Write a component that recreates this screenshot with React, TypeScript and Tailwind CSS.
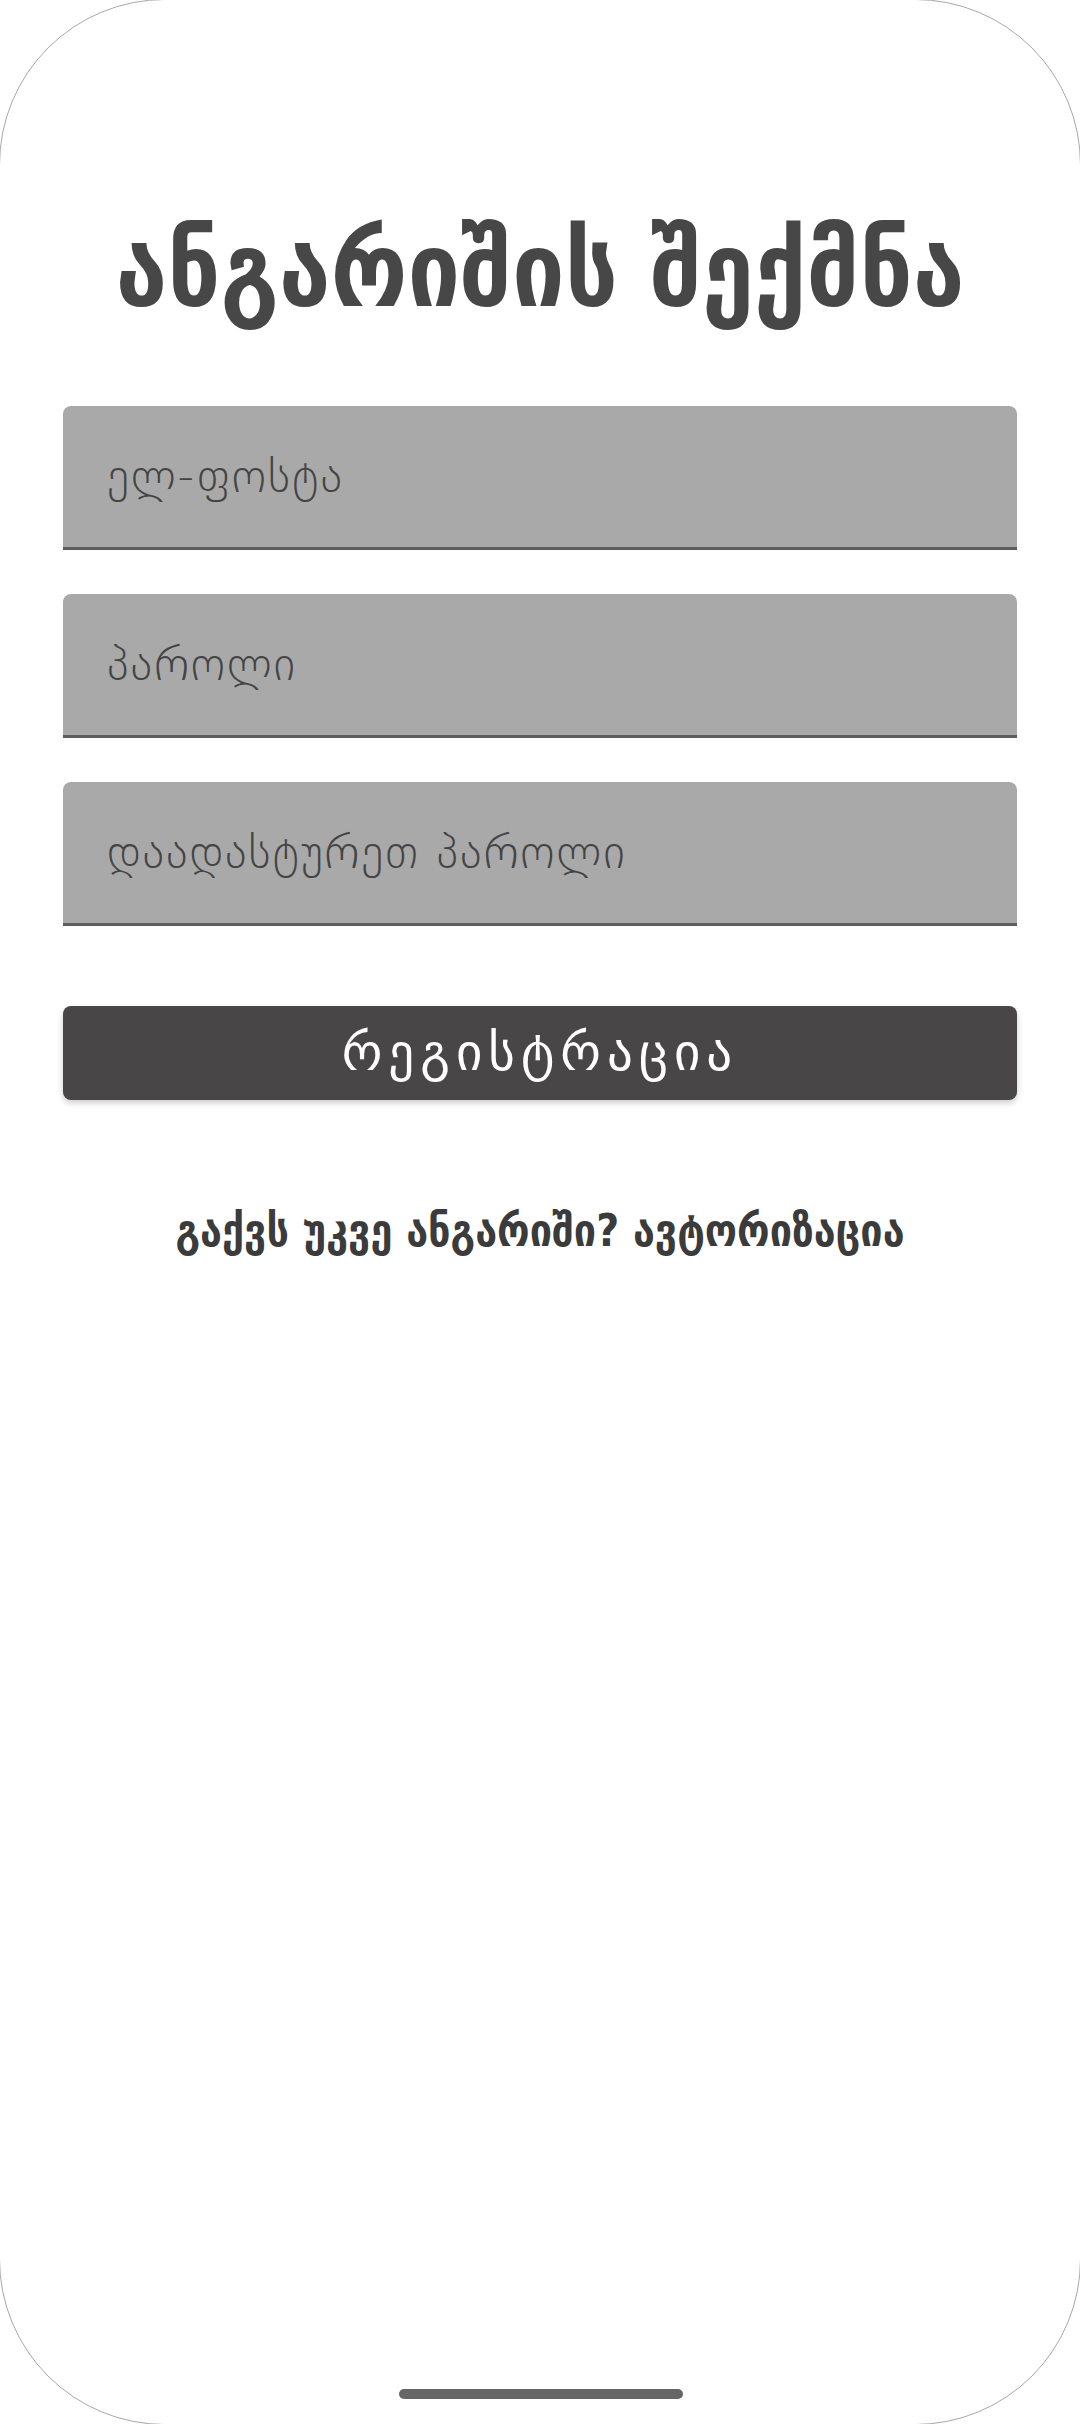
import React from 'react';

export default function App() {
  const fields = ['ელ-ფოსტა', 'პაროლი', 'დაადასტურეთ პაროლი'];

  return (
    <div className="w-[1080px] h-[2424px] overflow-hidden bg-white">
      <div className="relative -m-px w-[1082px] h-[2426px] rounded-[166px] border border-[#a8a8a8] font-['DejaVu_Sans',sans-serif]">
        <div className="flex flex-col px-[63px] pt-[220px]">
          {/* Title */}
          <h1 className="text-center text-[104px] leading-[100px] font-bold text-[#474747] font-['DejaVu_Sans_Condensed','DejaVu_Sans',sans-serif]">
            ანგარიშის შექმნა
          </h1>

          {/* Inputs */}
          <div className="mt-[86px] flex flex-col gap-[44px]">
            {fields.map((label) => (
              <div
                key={label}
                className="h-[144px] flex items-center px-[44px] bg-[#a9a9a9] rounded-t-[8px] border-b-[3px] border-[#5e5e5e]"
              >
                <span className="text-[46px] tracking-[2px] font-extralight text-[#444444]">{label}</span>
              </div>
            ))}
          </div>

          {/* Submit */}
          <button className="mt-[80px] h-[94px] w-full rounded-[8px] bg-[#484647] text-white text-[51px] tracking-[6px] shadow-[0_3px_6px_rgba(0,0,0,0.2)]">
            რეგისტრაცია
          </button>

          {/* Login link */}
          <p className="mt-[106px] text-center text-[44px] leading-[50px] font-bold text-[#3b3b3b] font-['DejaVu_Sans_Condensed','DejaVu_Sans',sans-serif]">
            გაქვს უკვე ანგარიში? ავტორიზაცია
          </p>
        </div>

        {/* Home indicator */}
        <div className="absolute left-[399px] top-[2389px] w-[284px] h-[10px] rounded-full bg-[#666666]" />
      </div>
    </div>
  );
}
